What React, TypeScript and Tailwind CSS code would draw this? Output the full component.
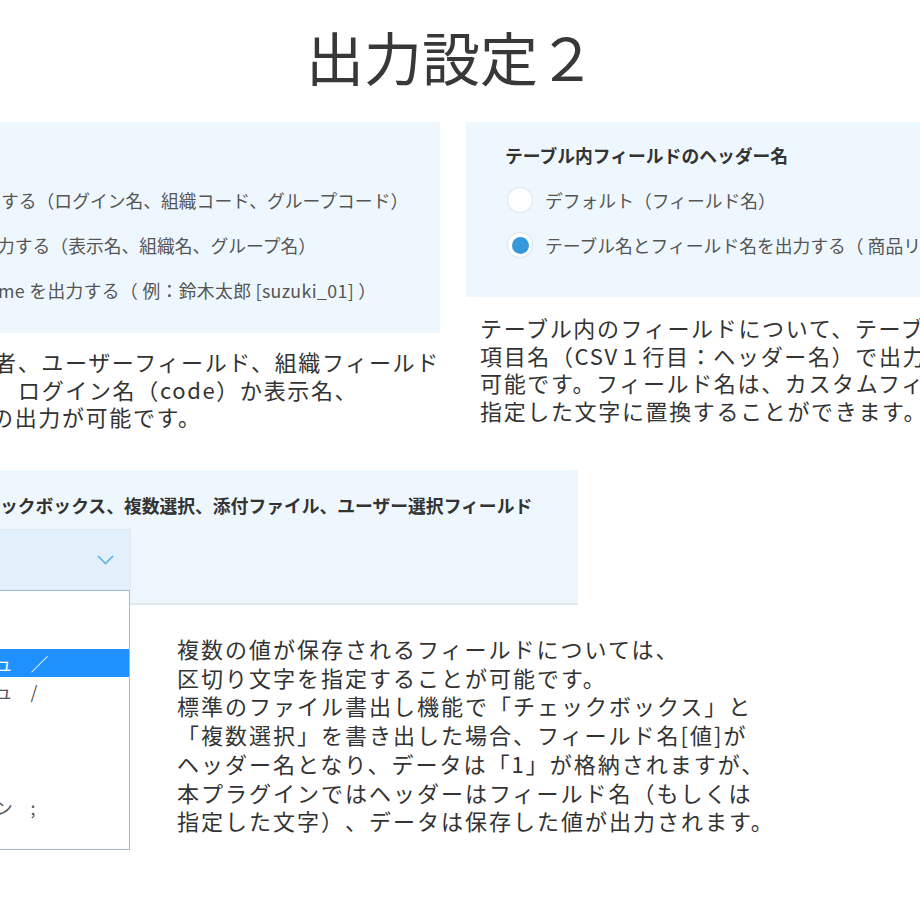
import React from "react";

const HEADER_OPTIONS = [
  { id: "default", label: "デフォルト（フィールド名）", checked: false },
  { id: "table", label: "テーブル名とフィールド名を出力する（ 商品リスト.商品名 ）", checked: true },
];

// visible tail of each option in the open list; blank rows are cut off on the left
const DELIMITERS: { text: string; active?: boolean }[] = [
  { text: "" },
  { text: "" },
  { text: "ュ　／", active: true },
  { text: "ュ　/" },
  { text: "" },
  { text: "" },
  { text: "" },
  { text: "ン　;" },
  { text: "" },
];

function Radio({ checked }: { checked: boolean }) {
  return (
    <span className="w-[26px] h-[26px] shrink-0 rounded-full bg-white border border-[#e4e6e8] shadow-[0_0_2px_rgba(0,0,0,0.06)] flex items-center justify-center">
      {checked && <span className="w-[17px] h-[17px] rounded-full bg-[#3498db]" />}
    </span>
  );
}

function Chevron() {
  return (
    <svg width="17" height="10" viewBox="0 0 17 10" fill="none">
      <polyline points="1,1 8.5,8.5 16,1" stroke="#62b0e4" strokeWidth="1.6" />
    </svg>
  );
}

export default function App() {
  return (
    <div className="w-[920px] h-[920px] overflow-hidden bg-white text-[#333] font-['Noto_Sans_CJK_JP',sans-serif] [text-spacing-trim:space-all]">
      <h1 className="pt-[27px] pr-[18px] text-center text-[58px] leading-[58px] font-normal text-[#383838]">
        出力設定２
      </h1>

      <div className="mt-[37px] flex gap-[26px]">
        <div className="w-[440px] shrink-0">
          <div className="h-[211px] bg-[#eff7fe] pt-[65px] flex flex-col gap-[19px] text-[17.8px] leading-[26px] text-[#555] whitespace-nowrap overflow-hidden">
            <div className="ml-[1px]">する（ログイン名、組織コード、グループコード）</div>
            <div className="-ml-[3px]">力する（表示名、組織名、グループ名）</div>
            <div className="-ml-[2px] tracking-[0.35px]">me を出力する（ 例：鈴木太郎 [suzuki_01] ）</div>
          </div>
          <div className="mt-[15px] text-[22px] leading-[27.5px] tracking-[1.65px] whitespace-nowrap overflow-hidden">
            <div className="-ml-[6px]">者、ユーザーフィールド、組織フィールド</div>
            <div className="ml-[18px]">ログイン名（code）か表示名、</div>
            <div className="-ml-[9px]">の出力が可能です。</div>
          </div>
        </div>

        <div className="w-[600px] shrink-0">
          <div className="h-[175px] bg-[#eff7fe] pl-[39px] pt-[20px] flex flex-col gap-[19px] whitespace-nowrap overflow-hidden">
            <div className="text-[17.8px] leading-[26px] font-bold text-[#333]">
              テーブル内フィールドのヘッダー名
            </div>
            {HEADER_OPTIONS.map((opt) => (
              <div key={opt.id} className="ml-[2px] flex items-center gap-[12px] h-[26px]">
                <Radio checked={opt.checked} />
                <span className="text-[17.8px] leading-[26px] text-[#555]">{opt.label}</span>
              </div>
            ))}
          </div>
          <div className="mt-[17px] ml-[14px] text-[22px] leading-[27.5px] tracking-[1.65px] whitespace-nowrap">
            <div>テーブル内のフィールドについて、テーブル名と</div>
            <div>項目名（CSV１行目：ヘッダー名）で出力することが</div>
            <div>可能です。フィールド名は、カスタムフィールドで</div>
            <div>指定した文字に置換することができます。</div>
          </div>
        </div>
      </div>

      <div className="mt-[39.5px]">
        <div className="w-[578px] h-[135px] bg-[#eff7fe] border-b-2 border-[#e4e9ee] pt-[22px]">
          <div className="text-[17.8px] leading-[26px] font-bold text-[#333] whitespace-nowrap">
            ックボックス、複数選択、添付ファイル、ユーザー選択フィールド
          </div>
          <div className="relative mt-[11px] w-[131px] h-[61px] bg-[#e2f0fc] border-t border-r border-[#e2e8ee] flex items-center justify-end pr-[16px]">
            <Chevron />
            <div className="absolute left-0 top-full w-[130px] h-[260px] bg-white border-t border-r border-b border-[#a2b7da] pt-[2px] z-10 overflow-hidden">
              {DELIMITERS.map((d, i) => (
                <div
                  key={i}
                  className={
                    d.active
                      ? "h-[28px] -ml-[5px] flex items-center text-[17.8px] whitespace-pre bg-[#1e90ff] text-white"
                      : i === 7
                        ? "h-[28px] -ml-[5px] pt-[8px] flex items-center text-[17.8px] whitespace-pre text-[#555]"
                        : "h-[28px] -ml-[5px] flex items-center text-[17.8px] whitespace-pre text-[#555]"
                  }
                >
                  {d.text}
                </div>
              ))}
            </div>
          </div>
        </div>

        <div className="mt-[29px] ml-[177px] text-[22px] leading-[28.7px] tracking-[2px] whitespace-nowrap">
          <div>複数の値が保存されるフィールドについては、</div>
          <div>区切り文字を指定することが可能です。</div>
          <div>標準のファイル書出し機能で「チェックボックス」と</div>
          <div>「複数選択」を書き出した場合、フィールド名[値]が</div>
          <div>ヘッダー名となり、データは「1」が格納されますが、</div>
          <div>本プラグインではヘッダーはフィールド名（もしくは</div>
          <div>指定した文字）、データは保存した値が出力されます。</div>
        </div>
      </div>
    </div>
  );
}
